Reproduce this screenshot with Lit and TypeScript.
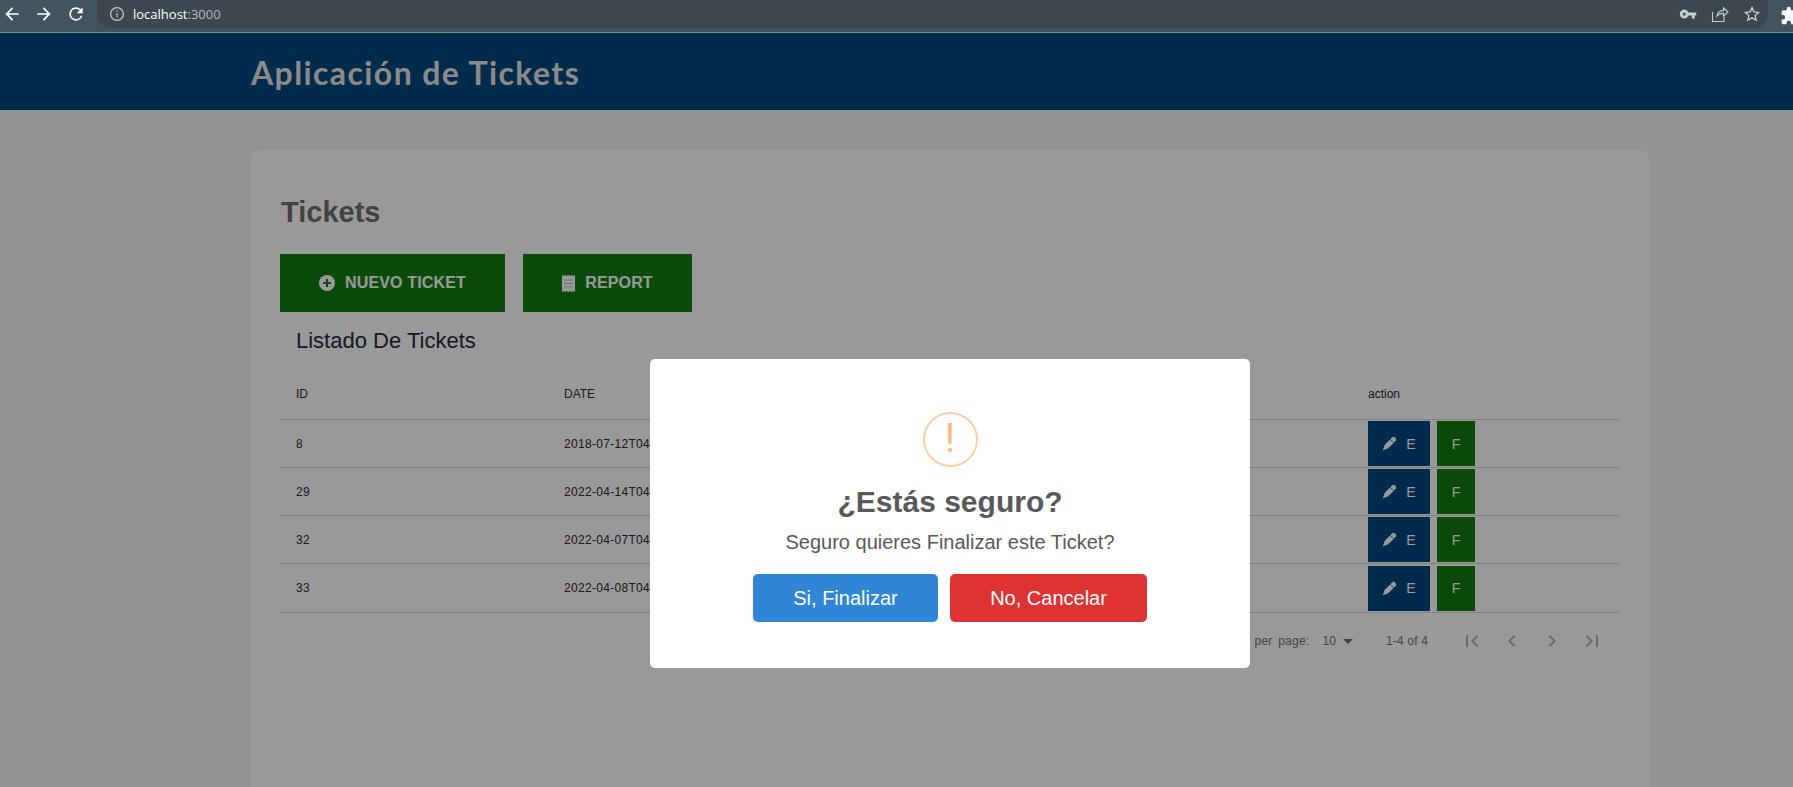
import { LitElement, html, css, svg } from 'lit';
import { customElement } from 'lit/decorators.js';

const rows = [
  { id: '8', date: '2018-07-12T04:00:00.000Z' },
  { id: '29', date: '2022-04-14T04:00:00.000Z' },
  { id: '32', date: '2022-04-07T04:00:00.000Z' },
  { id: '33', date: '2022-04-08T04:00:00.000Z' },
];

const icon = (size: number, body: unknown, box = 24) =>
  html`<svg width=${size} height=${size} viewBox="0 0 ${box} ${box}" fill="currentColor">${body}</svg>`;

const arrowBack = svg`<path d="M20 11H7.8l5.6-5.6L12 4l-8 8 8 8 1.4-1.4L7.8 13H20z"/>`;
const arrowFwd = svg`<path d="M4 11h12.2l-5.6-5.6L12 4l8 8-8 8-1.4-1.4 5.6-5.6H4z"/>`;
const reload = svg`<path d="M17.65 6.35A8 8 0 1 0 19.73 14h-2.08A6 6 0 1 1 12 6c1.66 0 3.14.69 4.22 1.78L13 11h7V4z"/>`;
// fat diagonal marker, as in the reference's edit buttons
const pencil = svg`
  <path d="M8 16 18.500 5.500" stroke="currentColor" stroke-width="8" stroke-linecap="round"/>
  <path d="M4.500 14.500 9.500 19.500 1 23z"/>
  <path d="M13.500 5.500 18.500 10.500" stroke="#002b4d" stroke-width="1"/>`;

@customElement('app-root')
export class AppRoot extends LitElement {
  static styles = css`
    :host {
      display: block;
      width: 1793px;
      height: 787px;
      overflow: hidden;
      position: relative;
      font-family: 'Liberation Sans', Arial, sans-serif;
    }

    .chrome {
      height: 32px;
      width: 1793px;
      display: flex;
      align-items: flex-start;
      background: #42555f;
      border-bottom: 1px solid #7a8990;
      color: #fff;
    }
    .nav {
      display: flex;
      gap: 12px;
      padding: 4px 0 0 2px;
      width: 97px;
      flex: none;
      box-sizing: border-box;
    }
    .pill {
      width: 1671px;
      flex: none;
      height: 28px;
      border-radius: 0 0 14px 14px;
      background: #3c474f;
      display: flex;
      align-items: center;
      padding: 0 0 0 12px;
      box-sizing: border-box;
      font: 13px 'Open Sans', sans-serif;
    }
    .pill .info {
      color: #c6cbce;
      margin-right: 8px;
      display: flex;
    }
    .port {
      color: #b4babe;
    }
    .pill-tools {
      margin-left: auto;
      display: flex;
      align-items: center;
      gap: 14px;
      color: #c8ccd0;
      padding-right: 7px;
    }
    .puzzle {
      margin: 6px 0 0 12px;
      flex: none;
      display: flex;
    }

    .page {
      width: 1900px;
      height: 754px;
      background: #f6f6f6;
      overflow: hidden;
    }
    .header {
      height: 77px;
      background: #004880;
      padding-left: 251px;
      display: flex;
      align-items: center;
    }
    .brand {
      margin: 2px 0 0;
      font: bold 32px Lato, sans-serif;
      color: #e6e6e6;
      letter-spacing: 1.4px;
    }
    .card {
      width: 1400px;
      margin: 40px auto 0;
      height: 700px;
      box-sizing: border-box;
      background: #fff;
      border-radius: 10px;
      padding: 44px 30px 0;
    }
    .card h2 {
      margin: 0 0 0 1px;
      font-size: 29px;
      line-height: 36px;
      font-weight: bold;
      color: #707070;
    }
    .actions {
      display: flex;
      gap: 18px;
      margin-top: 24px;
    }
    .btn {
      height: 58px;
      background: #127e12;
      color: #fff;
      font-size: 16px;
      font-weight: bold;
      letter-spacing: 0.15px;
      display: flex;
      align-items: center;
      justify-content: center;
      gap: 10px;
    }
    .btn.new {
      width: 225px;
    }
    .btn.report {
      width: 169px;
    }
    .panel h3 {
      margin: 0;
      padding: 15px 16px 0;
      font-size: 22px;
      line-height: 28px;
      font-weight: normal;
      color: #2a2a3c;
    }
    .row {
      display: grid;
      grid-template-columns: 268px 804px 1fr;
      border-bottom: 1px solid #d8d8d8;
      font-size: 12px;
      letter-spacing: 0.3px;
      color: #2c2c2c;
      align-items: center;
      height: 48px;
      box-sizing: border-box;
    }
    .row.tall {
      height: 49px;
    }
    .row > div {
      padding-left: 16px;
    }
    .row.head {
      height: 65px;
      padding-top: 14px;
      letter-spacing: 0;
    }
    .cell-actions {
      display: flex;
      gap: 7px;
    }
    .mini {
      height: 45px;
      color: #fff;
      font-size: 14px;
      letter-spacing: 0;
      display: flex;
      align-items: center;
      justify-content: center;
      gap: 9px;
    }
    .mini.edit {
      width: 62px;
      background: #004880;
    }
    .mini.finish {
      width: 38px;
      background: #127e12;
    }
    .pager {
      display: flex;
      justify-content: flex-end;
      align-items: center;
      height: 55px;
      font-size: 12px;
      letter-spacing: 0.15px;
      color: #6f6f6f;
      padding-right: 16px;
    }
    .pager .label {
      word-spacing: 2px;
      letter-spacing: 0.25px;
    }
    .pager .size {
      display: flex;
      align-items: center;
      margin-left: 13px;
    }
    .pager .count {
      margin: 0 32px 0 26px;
    }
    .pager .nav-icons {
      display: flex;
      gap: 16px;
      color: #b0b0b0;
    }

    .overlay {
      position: absolute;
      left: 0;
      right: 0;
      top: 33px;
      bottom: 0;
      background: rgba(0, 0, 0, 0.4);
    }
    .modal {
      position: absolute;
      left: 650px;
      top: 359px;
      width: 600px;
      height: 309px;
      box-sizing: border-box;
      background: #fff;
      border-radius: 5px;
      display: flex;
      flex-direction: column;
      align-items: center;
      padding-top: 53px;
      color: #595959;
    }
    .alert {
      width: 55px;
      height: 55px;
      box-sizing: border-box;
      border: 2px solid #facea8;
      border-radius: 50%;
      color: #f8bb86;
      font: 400 40px/50px Roboto, sans-serif;
      text-align: center;
    }
    .modal h2 {
      margin: 17px 0 0;
      font-size: 30px;
      line-height: 36px;
      font-weight: bold;
    }
    .modal p {
      margin: 8px 0 0;
      font-size: 20px;
      line-height: 28px;
    }
    .choices {
      display: flex;
      gap: 12px;
      margin-top: 18px;
    }
    .choice {
      height: 48px;
      border-radius: 5px;
      color: #fff;
      font-size: 20px;
      display: flex;
      align-items: center;
      justify-content: center;
    }
    .choice.ok {
      width: 185px;
      background: #3085d6;
    }
    .choice.no {
      width: 197px;
      background: #dd3333;
    }
  `;

  private renderChrome() {
    return html`<div class="chrome">
      <div class="nav">
        ${icon(20, arrowBack)} ${icon(20, arrowFwd)} ${icon(20, reload)}
      </div>
      <div class="pill">
        <span class="info">
          <svg width="16" height="16" viewBox="0 0 16 16" fill="none" stroke="currentColor" stroke-width="1.2">
            <circle cx="8" cy="8" r="6.4"></circle>
            <path d="M8 7v4.6M8 4.4v1.4"></path>
          </svg>
        </span>
        <span>localhost<span class="port">:3000</span></span>
        <div class="pill-tools">
          <svg width="18" height="18" viewBox="0 0 24 24" fill="currentColor">
            <path d="M12.65 10A6 6 0 1 0 12.65 14H17v4h4v-4h2v-4zM7 14a2 2 0 1 1 0-4 2 2 0 0 1 0 4z"></path>
          </svg>
          <svg width="18" height="18" viewBox="0 0 18 18" fill="none" stroke="currentColor" stroke-width="1.1">
            <path d="M1.5 7v9.5h11.5V12M6 11c.6-3.4 3-5.400 6.500-5.400V2.800l4.500 4.200-4.500 4.200V8.400C9.800 8.400 7.500 9.200 6 11z"></path>
          </svg>
          <svg width="18" height="18" viewBox="0 0 24 24" fill="none" stroke="currentColor" stroke-width="1.8">
            <path d="m12 3.500 2.600 5.700 6.200.7-4.600 4.200 1.300 6.100-5.500-3.100-5.500 3.100 1.300-6.100-4.600-4.200 6.200-.7z"></path>
          </svg>
        </div>
      </div>
      <div class="puzzle">
        <svg width="20" height="20" viewBox="0 0 24 24" fill="currentColor">
          <path d="M20.500 11H19V7a2 2 0 0 0-2-2h-4V3.500a2.500 2.500 0 0 0-5 0V5H4a2 2 0 0 0-2 2v3.800h1.500a2.700 2.700 0 0 1 0 5.400H2V20a2 2 0 0 0 2 2h3.800v-1.500a2.700 2.700 0 0 1 5.400 0V22H17a2 2 0 0 0 2-2v-4h1.500a2.500 2.500 0 0 0 0-5z"></path>
        </svg>
      </div>
    </div>`;
  }

  private renderRow(r: { id: string; date: string }, last: boolean) {
    return html`<div class="row ${last ? 'tall' : ''}">
      <div>${r.id}</div>
      <div>${r.date}</div>
      <div class="cell-actions">
        <div class="mini edit">${icon(15, pencil)}<span>E</span></div>
        <div class="mini finish">F</div>
      </div>
    </div>`;
  }

  render() {
    return html`
      ${this.renderChrome()}
      <div class="page">
        <div class="header"><h1 class="brand">Aplicación de Tickets</h1></div>
        <div class="card">
          <h2>Tickets</h2>
          <div class="actions">
            <div class="btn new">
              <svg width="16" height="16" viewBox="0 0 16 16">
                <circle cx="8" cy="8" r="8" fill="currentColor"></circle>
                <path d="M8 4v8M4 8h8" stroke="#127e12" stroke-width="2.200"></path>
              </svg>
              NUEVO TICKET
            </div>
            <div class="btn report">
              <svg width="13" height="17" viewBox="0 0 13 17">
                <path fill="currentColor" d="M0 0l1.600 1L3.200 0l1.600 1L6.500 0l1.700 1L9.800 0l1.600 1L13 0v17l-1.600-1-1.600 1-1.600-1-1.700 1-1.700-1-1.600 1-1.600-1L0 17z"></path>
                <path d="M2 5h9M2 8.500h9M2 12h9" stroke="#b4c4b4" stroke-width="1"></path>
              </svg>
              REPORT
            </div>
          </div>
          <div class="panel">
            <h3>Listado De Tickets</h3>
            <div class="row head">
              <div>ID</div>
              <div>DATE</div>
              <div>action</div>
            </div>
            ${rows.map((r, i) => this.renderRow(r, i === rows.length - 1))}
            <div class="pager">
              <span class="label">Rows per page:</span>
              <span class="size">10
                <svg width="24" height="24" viewBox="0 0 24 24" fill="currentColor"><path d="M7 10l5 5 5-5z"></path></svg>
              </span>
              <span class="count">1-4 of 4</span>
              <div class="nav-icons">
                ${icon(24, svg`<path d="M18.400 16.600 13.800 12l4.600-4.600L17 6l-6 6 6 6zM6 6h2v12H6z"/>`)}
                ${icon(24, svg`<path d="M15.400 7.400 14 6l-6 6 6 6 1.400-1.400-4.600-4.600z"/>`)}
                ${icon(24, svg`<path d="M10 6 8.600 7.400l4.600 4.600-4.600 4.600L10 18l6-6z"/>`)}
                ${icon(24, svg`<path d="M5.600 7.400 10.200 12l-4.600 4.600L7 18l6-6-6-6zM16 6h2v12h-2z"/>`)}
              </div>
            </div>
          </div>
        </div>
      </div>
      <div class="overlay"></div>
      <div class="modal">
        <div class="alert">!</div>
        <h2>¿Estás seguro?</h2>
        <p>Seguro quieres Finalizar este Ticket?</p>
        <div class="choices">
          <div class="choice ok">Si, Finalizar</div>
          <div class="choice no">No, Cancelar</div>
        </div>
      </div>
    `;
  }
}
